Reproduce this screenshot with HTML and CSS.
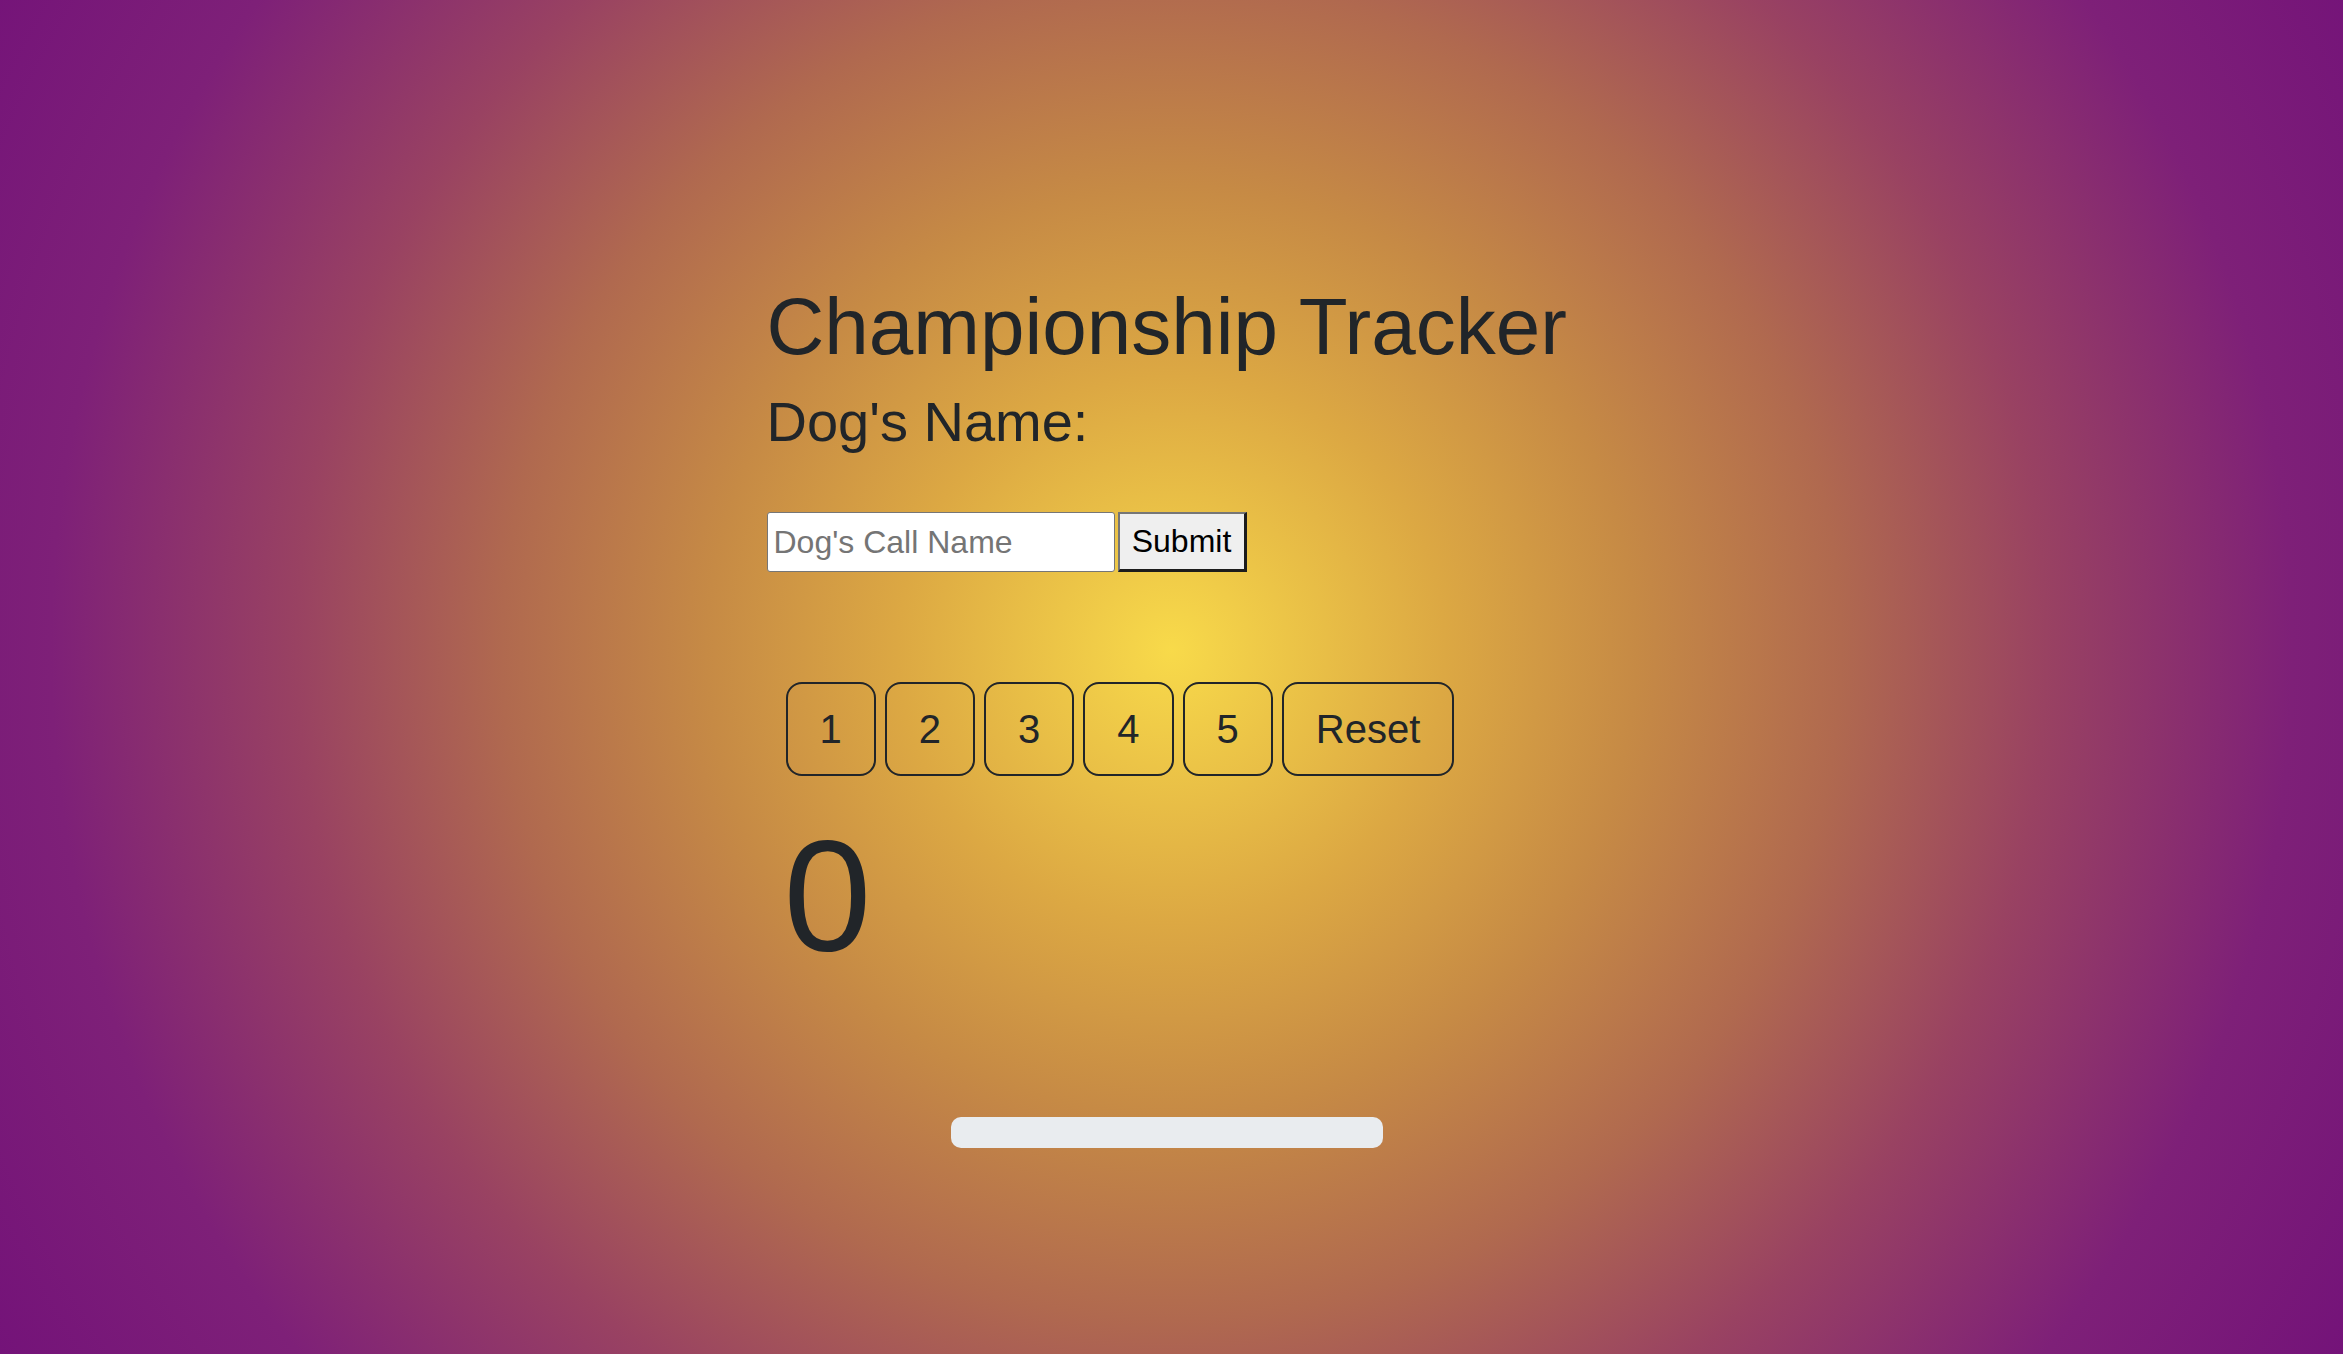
FILE: index.html
```html
<!DOCTYPE html>
<html lang="en">
<head>
<meta charset="utf-8">
<title>Championship Tracker</title>
<link rel="stylesheet" href="styles.css">
</head>
<body>
<main class="container">
  <h1 class="title">Championship Tracker</h1>
  <h2 class="subtitle">Dog's Name:</h2>
  <form class="name-form">
    <input class="name-input" type="text" placeholder="Dog's Call Name">
    <button class="submit-btn" type="button">Submit</button>
  </form>
  <div class="points">
    <button class="pt-btn" type="button">1</button>
    <button class="pt-btn" type="button">2</button>
    <button class="pt-btn" type="button">3</button>
    <button class="pt-btn" type="button">4</button>
    <button class="pt-btn" type="button">5</button>
    <button class="pt-btn" type="button">Reset</button>
  </div>
  <div class="total">0</div>
  <div class="progress"><div class="progress-bar" style="width:0%"></div></div>
</main>
</body>
</html>
```

FILE: styles.css
```css
html, body {
  margin: 0;
  padding: 0;
}
body {
  min-height: 100vh;
  font-family: "Liberation Sans", Arial, Helvetica, sans-serif;
  color: #212529;
  background: radial-gradient(circle at 50% 48%,
    #f8da4a 0%,
    #dca843 20%,
    #c68a45 34%,
    #b0694f 49%,
    #994262 64%,
    #7e2078 82%,
    #741379 100%);
  background-attachment: fixed;
}
.container {
  width: 810px;
  margin: 0 auto;
  padding-top: 279px;
  display: flex;
  flex-direction: column;
  align-items: flex-start;
}
.title {
  margin: 0;
  font-size: 80px;
  font-weight: 400;
  line-height: 1.2;
}
.subtitle {
  margin: 13px 0 0;
  font-size: 56px;
  font-weight: 400;
  line-height: 1.2;
}
.name-form {
  margin-top: 57px;
  display: flex;
  gap: 3px;
}
.name-input {
  box-sizing: border-box;
  width: 348px;
  height: 60px;
  padding: 0 6px;
  font-family: inherit;
  font-size: 32px;
  color: #000;
  background: #fff;
  border: 1.5px solid #767676;
  border-radius: 3px;
}
.name-input::placeholder {
  color: #757575;
}
.submit-btn {
  box-sizing: border-box;
  width: 129px;
  height: 60px;
  padding: 0;
  font-family: inherit;
  font-size: 32px;
  color: #000;
  background: #efefef;
  border-style: solid;
  border-width: 2px 3px 3px 2px;
  border-color: #767676 #1c1c1c #1c1c1c #767676;
}
.points {
  margin-top: 110px;
  padding-left: 19px;
  display: flex;
  gap: 9px;
}
.pt-btn {
  box-sizing: border-box;
  height: 94px;
  min-width: 89px;
  padding: 0 32px;
  font-family: inherit;
  font-size: 40px;
  color: #212529;
  background: transparent;
  border: 2px solid #212529;
  border-radius: 16px;
}
.total {
  margin-top: 40px;
  padding-left: 17px;
  font-size: 158px;
  line-height: 1;
}
.progress {
  margin-top: 143px;
  margin-left: 184px;
  width: 432px;
  height: 31px;
  background: #e9ecef;
  border-radius: 10px;
  overflow: hidden;
}
.progress-bar {
  height: 100%;
  background: #0d6efd;
}
```
